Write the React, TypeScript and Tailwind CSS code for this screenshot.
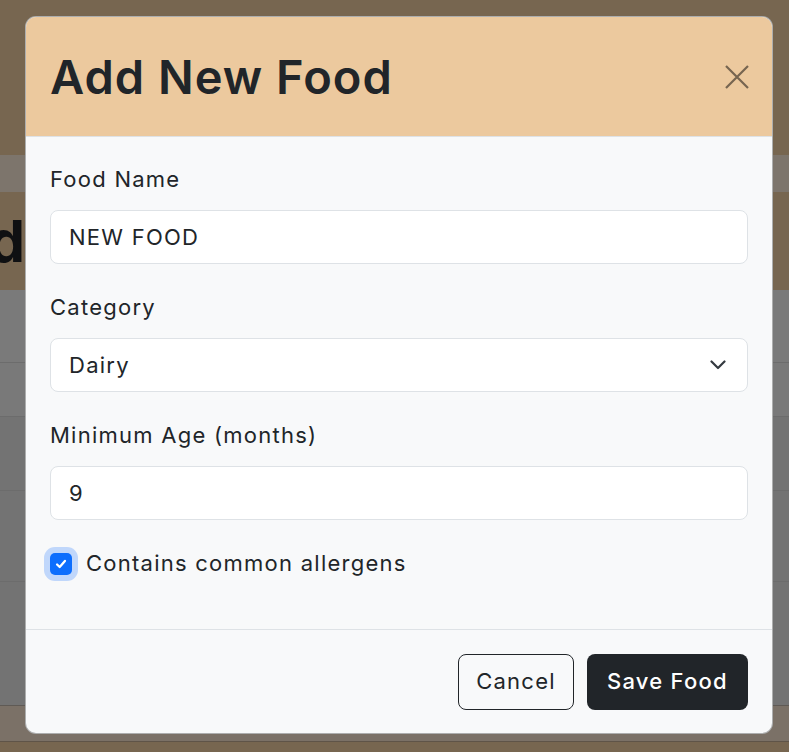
import React from "react";

const Field = ({ label, children }: { label: string; children: React.ReactNode }) => (
  <div className="mb-[27px]">
    <label className="block h-[33px] leading-[33px] mb-[14px] text-[22px] text-[#212529]">{label}</label>
    {children}
  </div>
);

export default function App() {
  return (
    <div className="relative w-[789px] h-[752px] overflow-hidden bg-[#776650] font-['Inter',sans-serif] tracking-[1.25px]">
      {/* page behind the backdrop */}
      <div className="flex flex-col">
        <div className="h-[155px] bg-[#776650]" />
        <div className="h-[37px] bg-[#7d756c]" />
        <div className="h-[98px] bg-[#776650] flex items-center">
          <div className="w-[25px] overflow-hidden flex justify-end">
            <span className="text-[58px] leading-none font-bold tracking-normal text-[#0f1012] whitespace-nowrap">Food</span>
          </div>
        </div>
        <div className="h-[73px] bg-[#7a7a7a] border-b border-[#6c6c6c]" />
        <div className="h-[54px] bg-[#797979] border-b border-[#6c6c6c]" />
        <div className="h-[74px] bg-[#737373] border-b border-[#6c6c6c]" />
        <div className="h-[91px] bg-[#737373] border-b border-[#6c6c6c]" />
        <div className="h-[124px] bg-[#737373] border-b border-[#5f5a55]" />
        <div className="h-[36px] bg-[#7b7167] border-b border-[#5f5448]" />
        <div className="flex-1 bg-[#6f5e48]" />
      </div>

      {/* modal */}
      <div className="absolute left-[25px] top-[16px] w-[748px] h-[718px] rounded-[11px] border border-black/30 overflow-hidden bg-[#f8f9fa] flex flex-col">
        <div className="h-[120px] shrink-0 bg-[#ecc99e] border-b border-[#dee2e6] flex items-center justify-between pl-[24px] pr-[23px]">
          <h1 className="text-[47px] font-semibold tracking-[1px] text-[#212529] leading-none">Add New Food</h1>
          <svg width="24" height="24" viewBox="0 0 24 24" className="text-[#766550]">
            <path d="M1 1L23 23M23 1L1 23" stroke="currentColor" strokeWidth="2.2" />
          </svg>
        </div>

        <div className="flex-1 px-[24px] pt-[26px]">
          <Field label="Food Name">
            <div className="h-[54px] rounded-[8px] border border-[#dee2e6] bg-white flex items-center pl-[18px] text-[22px] text-[#212529]">
              NEW FOOD
            </div>
          </Field>
          <Field label="Category">
            <div className="h-[54px] rounded-[8px] border border-[#dee2e6] bg-white flex items-center justify-between pl-[18px] pr-[21px] text-[22px] text-[#212529]">
              <span>Dairy</span>
              <svg width="16" height="10" viewBox="0 0 16 10" fill="none">
                <path d="M1.5 1.5L8 8L14.5 1.5" stroke="#343a40" strokeWidth="2.2" strokeLinecap="round" strokeLinejoin="round" />
              </svg>
            </div>
          </Field>
          <Field label="Minimum Age (months)">
            <div className="h-[54px] rounded-[8px] border border-[#dee2e6] bg-white flex items-center pl-[18px] text-[22px] text-[#212529]">
              9
            </div>
          </Field>
          <div className="h-[33px] flex items-center gap-[14px]">
            <div className="w-[22px] h-[22px] rounded-[5px] bg-[#0d6efd] shadow-[0_0_0_6px_#c0d7fb] flex items-center justify-center">
              <svg width="14" height="14" viewBox="0 0 16 16" fill="none">
                <path d="M3.5 8.5L6.5 11.5L12.5 4.5" stroke="white" strokeWidth="2.6" strokeLinecap="round" strokeLinejoin="round" />
              </svg>
            </div>
            <span className="text-[22px] text-[#212529]">Contains common allergens</span>
          </div>
        </div>

        <div className="h-[104px] shrink-0 border-t border-[#dee2e6] flex items-center justify-end gap-[13px] pr-[24px]">
          <button className="w-[116px] h-[56px] rounded-[8px] border border-[#212529] text-[22px] text-[#212529]">Cancel</button>
          <button className="w-[161px] h-[56px] rounded-[8px] bg-[#212529] text-[22px] font-medium text-white">Save Food</button>
        </div>
      </div>
    </div>
  );
}
